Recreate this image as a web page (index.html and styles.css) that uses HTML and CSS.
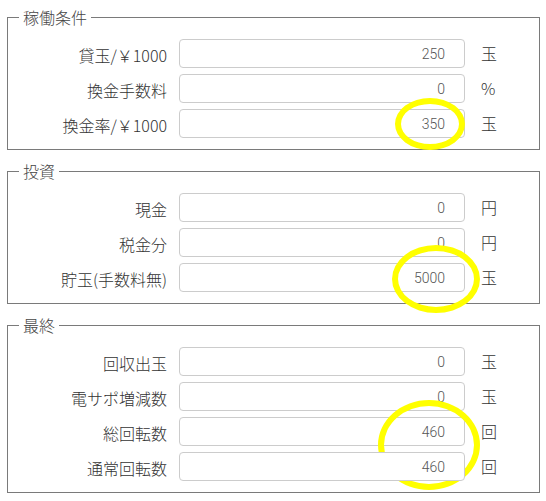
FILE: index.html
```html
<!DOCTYPE html>
<html lang="ja">

<head>
    <meta charset="UTF-8">
    <meta name="viewport" content="width=device-width, initial-scale=1.0">
    <title>稼働計算</title>
    <link rel="stylesheet" href="styles.css">
</head>

<body>
    <div class="page">
        <fieldset class="group">
            <legend>稼働条件</legend>
            <div class="rows">
                <label class="label">貸玉/￥1000</label>
                <div class="field"><input type="text" class="num" value="250" /></div>
                <span class="unit">玉</span>

                <label class="label">換金手数料</label>
                <div class="field"><input type="text" class="num" value="0" /></div>
                <span class="unit">%</span>

                <label class="label">換金率/￥1000</label>
                <div class="field">
                    <input type="text" class="num" value="350" />
                    <span class="mark mark-rate"></span>
                </div>
                <span class="unit">玉</span>
            </div>
        </fieldset>

        <fieldset class="group">
            <legend>投資</legend>
            <div class="rows">
                <label class="label">現金</label>
                <div class="field"><input type="text" class="num" value="0" /></div>
                <span class="unit">円</span>

                <label class="label">税金分</label>
                <div class="field"><input type="text" class="num" value="0" /></div>
                <span class="unit">円</span>

                <label class="label">貯玉(手数料無)</label>
                <div class="field">
                    <input type="text" class="num" value="5000" />
                    <span class="mark mark-stock"></span>
                </div>
                <span class="unit">玉</span>
            </div>
        </fieldset>

        <fieldset class="group">
            <legend>最終</legend>
            <div class="rows">
                <label class="label">回収出玉</label>
                <div class="field"><input type="text" class="num" value="0" /></div>
                <span class="unit">玉</span>

                <label class="label">電サポ増減数</label>
                <div class="field"><input type="text" class="num" value="0" /></div>
                <span class="unit">玉</span>

                <label class="label">総回転数</label>
                <div class="field">
                    <input type="text" class="num" value="460" />
                    <span class="mark mark-spin"></span>
                </div>
                <span class="unit">回</span>

                <label class="label">通常回転数</label>
                <div class="field"><input type="text" class="num" value="460" /></div>
                <span class="unit">回</span>
            </div>
        </fieldset>
    </div>
</body>

</html>
```

FILE: styles.css
```css
body {
    margin: 0px;
    padding: 0px;
    background-color: #ffffff;
    font-family: "Noto Sans CJK JP", "Noto Sans", sans-serif;
    font-weight: 300;
    color: #333333;
}

.page {
    padding: 7px 6px 0px 7px;
}

.group {
    margin: 0px 0px 11px 0px;
    min-width: 0;
    padding: 12px 0px 11px 0px;
    border: 1px solid #7a7a7a;
}

.group legend {
    margin-left: 11px;
    padding: 0px 4px;
    font-size: 16px;
    line-height: 20px;
    color: #444444;
}

.rows {
    display: grid;
    grid-template-columns: 171px 286px auto;
    row-gap: 6px;
    align-items: center;
}

.label {
    box-sizing: border-box;
    height: 29px;
    padding: 2px 12px 0px 0px;
    text-align: right;
    font-size: 16px;
    line-height: 29px;
    white-space: nowrap;
}

.field {
    position: relative;
    height: 29px;
}

.num {
    box-sizing: border-box;
    width: 100%;
    height: 29px;
    padding: 0px 19px 0px 8px;
    border: 1px solid #cccccc;
    border-radius: 4px;
    background-color: #ffffff;
    text-align: right;
    font-family: Roboto, "Liberation Sans", sans-serif;
    font-weight: 300;
    font-size: 14px;
    color: #555555;
}

.num:focus {
    outline: none;
}

.unit {
    padding-left: 16px;
    font-size: 16px;
    line-height: 29px;
}

/* yellow circles drawn over the values */
.mark {
    position: absolute;
    box-sizing: border-box;
    border: 6px solid #ffff00;
    border-radius: 50%;
    pointer-events: none;
}

.mark-rate {
    left: 216px;
    top: -11px;
    width: 70px;
    height: 52px;
}

.mark-stock {
    left: 213px;
    top: -18px;
    width: 88px;
    height: 68px;
}

.mark-spin {
    left: 199px;
    top: -17px;
    width: 102px;
    height: 90px;
}
```
